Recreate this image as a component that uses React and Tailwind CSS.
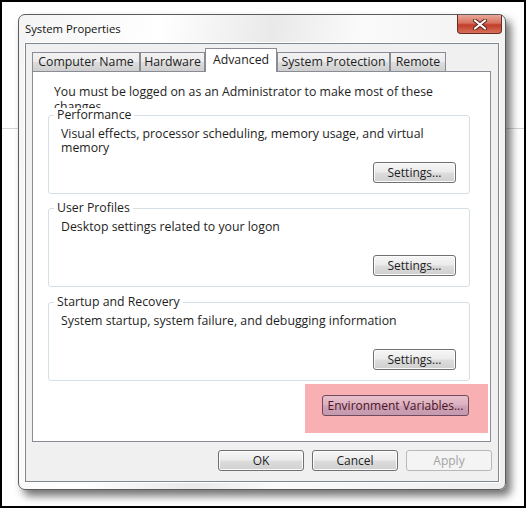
import React from 'react';

const font = { fontFamily: '"Open Sans", "Noto Sans", Arial, sans-serif' };

function WinButton({ children, className = '', disabled = false }) {
  return (
    <button
      className={
        'h-[21px] rounded-[3px] border text-[12px] leading-none ' +
        (disabled
          ? 'border-[#b5b9bd] bg-[#f4f4f4] text-[#a3a3a3] '
          : 'border-[#707070] bg-[linear-gradient(to_bottom,#f6f6f6_0%,#ebebeb_48%,#dddddd_52%,#cfcfcf_100%)] text-[#1e1e1e] shadow-[inset_0_0_0_1px_#fbfbfb] ') +
        className
      }
    >
      {children}
    </button>
  );
}

function GroupBox({ title, children, className = '' }) {
  return (
    <div className={'ml-[15px] w-[422px] h-[79px] rounded-[3px] border border-[#d5dfe5] flex flex-col ' + className}>
      <span className="-mt-[8px] ml-[5px] self-start bg-white px-[3px] leading-[14px] text-[#1e1e1e]">{title}</span>
      <p className="mt-[5px] pl-[12px] w-[400px] leading-[14px] text-[#1e1e1e]">{children}</p>
      <WinButton className="mt-auto mb-[10px] mr-[13px] self-end w-[83px]">Settings...</WinButton>
    </div>
  );
}

export default function App() {
  const tabs = [
    { label: 'Computer Name', w: 'w-[108px]' },
    { label: 'Hardware', w: 'w-[65px]' },
    { label: 'Advanced', w: 'w-[72px]', active: true },
    { label: 'System Protection', w: 'w-[113px]' },
    { label: 'Remote', w: 'w-[56px]' },
  ];

  return (
    <div
      style={font}
      className="w-[526px] h-[508px] border-2 border-black bg-[linear-gradient(to_bottom,#ffffff_126px,#d4d4d4_126px,#d4d4d4_127px,#ffffff_127px)] text-[12.3px] text-[#1e1e1e] overflow-hidden"
    >
      {/* Window */}
      <div className="ml-[16px] mt-[12px] w-[488px] h-[476px] rounded-[7px] border border-[#5c5c5c] bg-[linear-gradient(100deg,#f4f4f4_0%,#ffffff_25%,#e9e9e9_45%,#fafafa_60%,#eeeeee_100%)] shadow-[5px_6px_9px_rgba(0,0,0,0.55)] px-[6px] pb-[7px] flex flex-col">
        {/* Title bar */}
        <div className="h-[28px] flex items-start justify-between">
          <span className="mt-[6px] text-[11.3px] text-[#111]">System Properties</span>
          <div className="-mr-[3px] w-[45px] h-[19px] rounded-b-[4px] border border-t-0 border-[#6b2a20] bg-[linear-gradient(to_bottom,#e8a898_0%,#d77060_45%,#c23c28_55%,#d6705a_100%)] flex items-center justify-center">
            <svg width="14" height="11" viewBox="0 0 14 11">
              <path d="M2 1.5 L12 9.5 M12 1.5 L2 9.5" stroke="#5a2018" strokeWidth="4" strokeLinecap="round" />
              <path d="M2 1.5 L12 9.5 M12 1.5 L2 9.5" stroke="#ffffff" strokeWidth="2.2" strokeLinecap="round" />
            </svg>
          </div>
        </div>

        {/* Client area */}
        <div className="flex-1 border border-[#7d8790] bg-[#f0f0f0] shadow-[0_0_0_1px_#ffffff] pl-[6px] pr-[6px] pt-[5px] flex flex-col">
          {/* Tabs */}
          <div className="h-[22px] flex items-end">
            {tabs.map((t) =>
              t.active ? (
                <div
                  key={t.label}
                  className={t.w + ' relative z-10 -mb-px h-[24px] border border-b-0 border-[#898c95] bg-white flex items-start justify-center pt-[2px] text-[#1e1e1e]'}
                >
                  {t.label}
                </div>
              ) : (
                <div
                  key={t.label}
                  className={t.w + ' h-[19px] border border-b-0 border-[#898c95] bg-[linear-gradient(to_bottom,#f2f2f2_0%,#ebebeb_50%,#dddddd_51%,#cfcfcf_100%)] flex items-center justify-center text-[#1e1e1e]'}
                >
                  {t.label}
                </div>
              )
            )}
          </div>

          {/* Tab panel */}
          <div className="w-[459px] h-[371px] border border-[#898c95] bg-white pt-[12px] flex flex-col">
            <p className="ml-[21px] w-[400px] h-[25px] leading-[15px] overflow-hidden">
              You must be logged on as an Administrator to make most of these changes.
            </p>
            <GroupBox title="Performance" className="mt-[6px]">
              Visual effects, processor scheduling, memory usage, and virtual memory
            </GroupBox>
            <GroupBox title="User Profiles" className="mt-[14px]">
              Desktop settings related to your logon
            </GroupBox>
            <GroupBox title="Startup and Recovery" className="mt-[15px]">
              System startup, system failure, and debugging information
            </GroupBox>

            {/* Highlight */}
            <div className="mt-[3px] ml-[272px] w-[183px] h-[49px] bg-[#f9b0b3] pt-[11px] pl-[17px]">
              <button className="w-[147px] h-[21px] rounded-[3px] border border-[#6e4a5c] bg-[linear-gradient(to_bottom,#e9c0cb_0%,#dcb0c0_48%,#cfa2b6_52%,#c49aae_100%)] text-[12px] leading-none text-[#4a1424]">
                Environment Variables...
              </button>
            </div>
          </div>

          {/* Bottom buttons */}
          <div className="mt-[8px] flex justify-end gap-[8px]">
            <WinButton className="w-[86px]">OK</WinButton>
            <WinButton className="w-[86px]">Cancel</WinButton>
            <WinButton className="w-[86px]" disabled>
              Apply
            </WinButton>
          </div>
        </div>
      </div>
    </div>
  );
}
